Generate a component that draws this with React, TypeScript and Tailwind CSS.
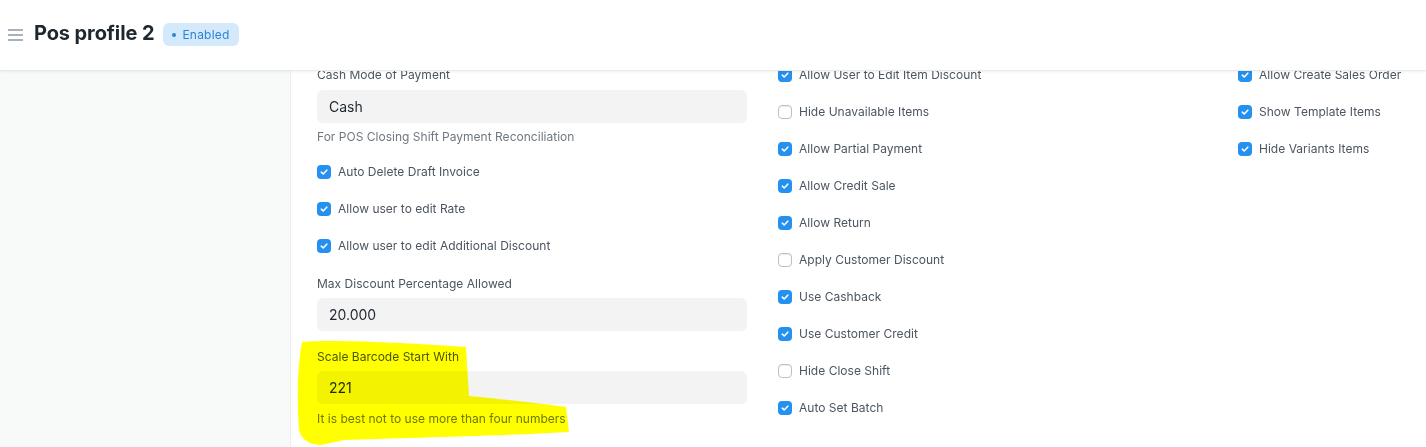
import React from "react"

type CheckRow = { label: string; checked: boolean }

const middleChecks: CheckRow[] = [
  { label: "Allow User to Edit Item Discount", checked: true },
  { label: "Hide Unavailable Items", checked: false },
  { label: "Allow Partial Payment", checked: true },
  { label: "Allow Credit Sale", checked: true },
  { label: "Allow Return", checked: true },
  { label: "Apply Customer Discount", checked: false },
  { label: "Use Cashback", checked: true },
  { label: "Use Customer Credit", checked: true },
  { label: "Hide Close Shift", checked: false },
  { label: "Auto Set Batch", checked: true }
]

const rightChecks: CheckRow[] = [
  { label: "Allow Create Sales Order", checked: true },
  { label: "Show Template Items", checked: true },
  { label: "Hide Variants Items", checked: true }
]

const Checkbox = ({ checked }: { checked: boolean }) =>
  checked ? (
    <span className="w-[14px] h-[14px] rounded-[4px] bg-[#2490ef] flex items-center justify-center shrink-0">
      <svg width="10" height="10" viewBox="0 0 10 10" fill="none">
        <path
          d="M2.3 5.2 L4.2 7 L7.8 3.2"
          stroke="white"
          strokeWidth="1.6"
          strokeLinecap="round"
          strokeLinejoin="round"
        />
      </svg>
    </span>
  ) : (
    <span className="w-[14px] h-[14px] rounded-[4px] bg-white border border-[#b9c1c8] shadow-[inset_0_1px_1px_rgba(0,0,0,0.08)] shrink-0" />
  )

const CheckField = ({ label, checked, className = "" }: CheckRow & { className?: string }) => (
  <div className={`flex items-center gap-[7px] h-[18px] ${className}`}>
    <Checkbox checked={checked} />
    <span className="text-[12px] leading-[18px] text-[#4c5560] tracking-[0.02px]">{label}</span>
  </div>
)

const Input = ({ value }: { value: string }) => (
  <div className="h-[33px] rounded-[6px] bg-[#f3f3f4] flex items-center px-[12px] text-[14px] text-[#1f272e]">
    {value}
  </div>
)

export default function App() {
  return (
    <div
      className="w-[1426px] h-[447px] overflow-hidden bg-white flex flex-col"
      style={{ fontFamily: "Inter, 'Noto Sans', sans-serif" }}>
      {/* Sticky page head */}
      <header className="relative z-10 h-[71px] shrink-0 bg-white border-b border-[#e7eaec] shadow-[0_1px_3px_rgba(0,0,0,0.06)] flex items-center pl-[8px] pb-[1px]">
        <svg width="15" height="12" viewBox="0 0 15 12" className="mr-[11px] mt-[1px]">
          <path d="M0 1h15M0 6h15M0 11h15" stroke="#8d99a6" strokeWidth="1.6" />
        </svg>
        <h1 className="text-[20px] font-bold text-[#1f272e] tracking-[-0.1px] mb-[3px]">Pos profile 2</h1>
        <span className="ml-[9px] h-[23px] px-[9px] rounded-[6px] bg-[#d5e9fc] text-[#2d84d6] text-[12px] tracking-[0.2px] flex items-center gap-[6px]">
          <span className="w-[4px] h-[4px] rounded-full bg-[#2d84d6]" />
          Enabled
        </span>
      </header>

      <div className="flex flex-1 -mt-[7px]">
        {/* Sidebar */}
        <aside className="w-[291px] shrink-0 bg-[#f8f9f9] border-r border-[#eceef0]" />

        {/* Form body */}
        <main className="relative flex-1 pl-[26px] pt-[2px]">
          <div className="grid grid-cols-[430px_429px_430px] gap-x-[31px]">
            {/* Column 1 */}
            <div className="flex flex-col">
              <label className="text-[12px] leading-[18px] text-[#4c5560] tracking-[0.02px] mb-[6px]">
                Cash Mode of Payment
              </label>
              <Input value="Cash" />
              <p className="mt-[5px] text-[12px] leading-[18px] text-[#6f7880] tracking-[0.02px]">
                For POS Closing Shift Payment Reconciliation
              </p>
              <CheckField className="mt-[17px]" label="Auto Delete Draft Invoice" checked />
              <CheckField className="mt-[19px]" label="Allow user to edit Rate" checked />
              <CheckField className="mt-[19px]" label="Allow user to edit Additional Discount" checked />
              <label className="mt-[20px] text-[12px] leading-[18px] text-[#4c5560] tracking-[0.02px] mb-[5px]">
                Max Discount Percentage Allowed
              </label>
              <Input value="20.000" />
              <label className="mt-[17px] text-[12px] leading-[18px] text-[#4c5560] tracking-[0.02px] mb-[5px]">
                Scale Barcode Start With
              </label>
              <Input value="221" />
              <p className="mt-[6px] text-[12px] leading-[18px] text-[#6f7880] tracking-[0.02px]">
                It is best not to use more than four numbers
              </p>
            </div>

            {/* Column 2 */}
            <div className="flex flex-col gap-[19px]">
              {middleChecks.map((c) => (
                <CheckField key={c.label} label={c.label} checked={c.checked} />
              ))}
            </div>

            {/* Column 3 */}
            <div className="flex flex-col gap-[19px]">
              {rightChecks.map((c) => (
                <CheckField key={c.label} label={c.label} checked={c.checked} />
              ))}
            </div>
          </div>

          {/* Yellow marker annotation */}
          <svg
            className="absolute left-0 top-0 pointer-events-none mix-blend-multiply"
            width="300"
            height="390"
            viewBox="292 64 300 390">
            <path
              d="M303 342 C340 339 420 344 467 347 L470 396 C490 398 530 402 567 407 L570 432 C500 436 400 438 345 440 L322 445 C312 445 302 440 300 430 C298 400 298 370 303 342 Z"
              fill="#ffff00"
            />
          </svg>
        </main>
      </div>
    </div>
  )
}
